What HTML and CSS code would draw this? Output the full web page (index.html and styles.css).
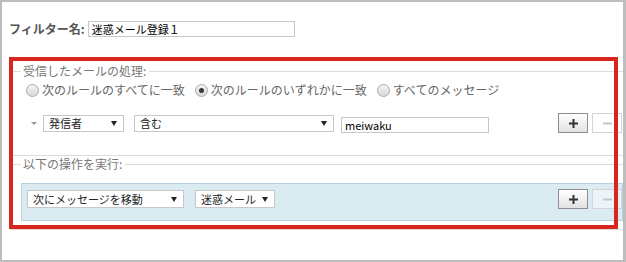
FILE: index.html
```html
<!DOCTYPE html>
<html>
  <head>
    <meta charset="utf-8">
    <link rel="stylesheet" href="styles.css">
  </head>
  <body>
    <div class="frame">

      <div class="name-row">
        <label class="name-label">フィルター名:</label>
        <input type="text" class="field name-field" value="迷惑メール登録１">
      </div>

      <div class="legend">受信したメールの処理:</div>

      <div class="radios">
        <span class="radio"></span><span class="radio-text">次のルールのすべてに一致</span>
        <span class="radio on"></span><span class="radio-text">次のルールのいずれかに一致</span>
        <span class="radio"></span><span class="radio-text">すべてのメッセージ</span>
      </div>

      <div class="rule-row">
        <span class="caret-small"></span>
        <div class="select sel-from"><span>発信者</span><span class="arrow"></span></div>
        <div class="select sel-op"><span>含む</span><span class="arrow"></span></div>
        <input type="text" class="field rule-value" value="meiwaku">
        <div class="btns">
          <button class="btn">
            <svg width="9" height="9" viewBox="0 0 9 9"><rect x="3.5" y="0" width="2" height="9" fill="#333"/><rect x="0" y="3.5" width="9" height="2" fill="#333"/></svg>
          </button>
          <button class="btn disabled">
            <svg width="9" height="9" viewBox="0 0 9 9"><rect x="0" y="3.5" width="9" height="2" fill="#c4c4c4"/></svg>
          </button>
        </div>
      </div>

      <div class="sep"></div>

      <div class="legend legend-tight">以下の操作を実行:</div>

      <div class="action">
        <div class="select act-move"><span>次にメッセージを移動</span><span class="arrow"></span></div>
        <div class="select act-folder"><span>迷惑メール</span><span class="arrow"></span></div>
        <div class="btns">
          <button class="btn">
            <svg width="9" height="9" viewBox="0 0 9 9"><rect x="3.5" y="0" width="2" height="9" fill="#333"/><rect x="0" y="3.5" width="9" height="2" fill="#333"/></svg>
          </button>
          <button class="btn disabled">
            <svg width="9" height="9" viewBox="0 0 9 9"><rect x="0" y="3.5" width="9" height="2" fill="#c4c4c4"/></svg>
          </button>
        </div>
      </div>

      <div class="sep sep-bottom"></div>

      <!-- red annotation box drawn over the form -->
      <div class="highlight"></div>
    </div>
  </body>
</html>
```

FILE: styles.css
```css
*{
  box-sizing:border-box;
}

body{
  margin:0;
  background:#fff;
  font-family:"Noto Sans CJK JP","Noto Sans",sans-serif;
}

.frame{
  position:relative;
  width:626px;
  height:262px;
  border:2px solid #bdbdbd;
  border-right-width:3px;
}

/* filter name */
.name-row{
  display:flex;
  align-items:center;
  height:16px;
  margin-top:19px;
  padding-left:7px;
}
.name-label{
  font-size:12px;
  font-weight:bold;
  color:#555;
  line-height:16px;
  margin-right:3px;
}
.field{
  height:16px;
  border:1px solid #c8c8c8;
  padding:0 3px;
  margin:0;
  font-family:"Noto Sans CJK JP",sans-serif;
  font-size:11px;
  line-height:14px;
  color:#000;
  background:#fff;
  outline:none;
}
.name-field{
  width:207px;
}

/* legend lines */
.legend{
  display:flex;
  align-items:center;
  height:16px;
  margin:26px 0 0 8px;
  font-size:12px;
  line-height:16px;
  color:#777;
}
.legend::before{
  content:"";
  width:11px;
  border-top:1px solid #dcdcdc;
  margin-right:2px;
}
.legend::after{
  content:"";
  flex:1;
  border-top:1px solid #dcdcdc;
  margin-left:3px;
}
.legend-tight{
  margin-top:0;
}

/* radios */
.radios{
  display:flex;
  align-items:center;
  height:16px;
  margin-top:3px;
  padding-left:24px;
  font-size:12px;
  line-height:16px;
  color:#666;
}
.radio{
  position:relative;
  width:13px;
  height:13px;
  border-radius:50%;
  border:1px solid #a8a8a8;
  background:linear-gradient(#f3f3f3,#d9d9d9);
  margin-right:3px;
}
.radio.on::after{
  content:"";
  position:absolute;
  left:3px;
  top:3px;
  width:5px;
  height:5px;
  border-radius:50%;
  background:#3a3a3a;
}
.radio-text{
  margin-right:10px;
}

/* rule row */
.rule-row{
  display:flex;
  align-items:center;
  height:20px;
  margin-top:15px;
  padding-left:29px;
  padding-right:1px;
}
.caret-small{
  width:0;
  height:0;
  border-left:3px solid transparent;
  border-right:3px solid transparent;
  border-top:3px solid #999;
  margin-right:6px;
}
.select{
  display:flex;
  align-items:center;
  justify-content:space-between;
  height:17px;
  border:1px solid #c8c8c8;
  background:#fff;
  padding:0 6px 0 5px;
  font-size:11px;
  line-height:15px;
  color:#222;
}
.arrow{
  width:0;
  height:0;
  border-left:3px solid transparent;
  border-right:3px solid transparent;
  border-top:5px solid #222;
}
.sel-from{
  width:81px;
  margin-right:10px;
}
.sel-op{
  width:200px;
  margin-right:7px;
}
.rule-value{
  width:148px;
  margin-top:3px;
}

.btns{
  display:flex;
  gap:4px;
  margin-left:auto;
}
.btn{
  display:flex;
  align-items:center;
  justify-content:center;
  width:30px;
  height:20px;
  padding:0;
  border:1px solid #8e8e8e;
  background:linear-gradient(#ffffff,#e2e2e2);
}
.btn.disabled{
  border-color:#d4d4d4;
  background:rgba(255,255,255,0.45);
}

.sep{
  border-top:1px solid #dcdcdc;
  margin:22px 0 0 8px;
}
.sep-bottom{
  margin-top:8px;
}

/* action box */
.action{
  display:flex;
  align-items:flex-start;
  height:38px;
  margin:11px 0 0 19px;
  padding:5px 0 0 5px;
  background:#daebf2;
  border:1px solid #b7d1dd;
}
.action .select{
  height:18px;
  margin-top:1px;
}
.act-move{
  width:157px;
  margin-right:11px;
}
.act-folder{
  width:80px;
}

.highlight{
  position:absolute;
  left:7px;
  top:55px;
  width:609px;
  height:172px;
  border:4px solid #d8251d;
}
```
